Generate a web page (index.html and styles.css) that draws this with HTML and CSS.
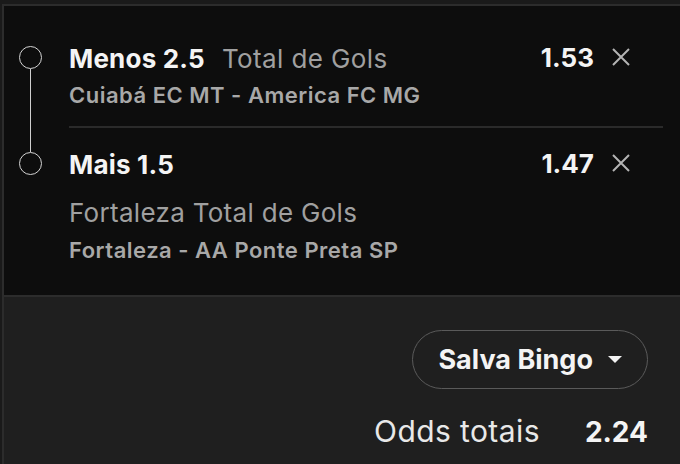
FILE: index.html
```html
<!DOCTYPE html>
<html lang="pt-BR">
<head>
  <meta charset="UTF-8">
  <meta name="viewport" content="width=device-width, initial-scale=1.0">
  <title>Boletim de apostas</title>
  <link rel="stylesheet" href="styles.css">
</head>
<body>
  <div class="slip">
    <div class="selections">
      <div class="bet">
        <div class="rail">
          <span class="rail-line rail-line-top is-empty"></span>
          <span class="dot"></span>
          <span class="rail-line rail-line-bottom"></span>
        </div>
        <div class="bet-body">
          <div class="bet-head">
            <div class="bet-title">Menos 2.5<span class="market">Total de Gols</span></div>
            <span class="odds">1.53</span>
            <button class="remove" aria-label="Remover">
              <svg width="20" height="20" viewBox="0 0 20 20"><path d="M2 2 L18 18 M18 2 L2 18" stroke="currentColor" stroke-width="2" fill="none"/></svg>
            </button>
          </div>
          <div class="event">Cuiabá EC MT - America FC MG</div>
        </div>
      </div>

      <div class="bet">
        <div class="rail">
          <span class="rail-line rail-line-top"></span>
          <span class="dot"></span>
          <span class="rail-line rail-line-bottom is-empty"></span>
        </div>
        <div class="bet-body">
          <div class="bet-head">
            <div class="bet-title">Mais 1.5</div>
            <span class="odds">1.47</span>
            <button class="remove" aria-label="Remover">
              <svg width="20" height="20" viewBox="0 0 20 20"><path d="M2 2 L18 18 M18 2 L2 18" stroke="currentColor" stroke-width="2" fill="none"/></svg>
            </button>
          </div>
          <div class="market-line">Fortaleza Total de Gols</div>
          <div class="event">Fortaleza - AA Ponte Preta SP</div>
        </div>
      </div>
    </div>

    <div class="summary">
      <button class="pill">
        Salva Bingo
        <svg width="14" height="7" viewBox="0 0 14 7"><path d="M0 0 L14 0 L7 7 Z" fill="currentColor"/></svg>
      </button>
      <div class="total">
        <span class="total-label">Odds totais</span>
        <span class="total-value">2.24</span>
      </div>
    </div>
  </div>
</body>
</html>
```

FILE: styles.css
```css
body {
  margin: 0;
  background-color: #1a1a1a;
  font-family: Inter, "Liberation Sans", Arial, sans-serif;
  color: #f2f2f2;
}
.slip {
  margin: 4px 0 0 2px;
  border-top: 2px solid #2c2c2c;
  border-left: 2px solid #2c2c2c;
  height: 458px;
  display: flex;
  flex-direction: column;
}
.selections {
  background-color: #0d0d0d;
  padding: 16px 17px 0 0;
  border-bottom: 2px solid #2c2c2c;
}
.bet {
  display: flex;
}
.rail {
  width: 65px;
  display: flex;
  flex-direction: column;
  align-items: center;
  padding: 0 29px 0 17px;
  box-sizing: border-box;
}
.rail-line {
  width: 1.5px;
  background-color: #cfcfcf;
}
.rail-line-top {
  height: 24px;
}
.rail-line-bottom {
  flex: 1;
}
.rail-line.is-empty {
  background-color: transparent;
}
.dot {
  width: 23px;
  height: 23px;
  box-sizing: border-box;
  border: 1.7px solid #d4d4d4;
  border-radius: 50%;
}
.bet-body {
  flex: 1;
  padding: 21px 0 18px;
  border-bottom: 2px solid #2a2a2a;
}
.bet:last-child .bet-body {
  border-bottom: none;
  padding-bottom: 32px;
}
.bet-head {
  display: flex;
  align-items: center;
  height: 32px;
  padding-right: 32px;
}
.bet-title {
  flex: 1;
  font-size: 26px;
  font-weight: 700;
  line-height: 32px;
  letter-spacing: 0.2px;
  color: #f4f4f4;
}
.market {
  font-weight: 400;
  color: #a0a0a0;
  margin-left: 17px;
  letter-spacing: 0.4px;
}
.odds {
  font-size: 26px;
  font-weight: 700;
  color: #f4f4f4;
  margin-top: -4px;
}
.remove {
  background: none;
  border: none;
  padding: 0;
  margin: -4px 0 0 17px;
  color: #b4b4b4;
  display: flex;
  cursor: pointer;
}
.market-line {
  margin-top: 16px;
  font-size: 26px;
  line-height: 32px;
  letter-spacing: 0.3px;
  color: #a0a0a0;
}
.event {
  margin-top: 7px;
  font-size: 22px;
  font-weight: 600;
  line-height: 26px;
  letter-spacing: 0.5px;
  color: #a8a8a8;
}
.market-line + .event {
  margin-top: 8px;
}
.summary {
  flex: 1;
  background-color: #1f1f1f;
  padding: 33px 32px 0 0;
  display: flex;
  flex-direction: column;
  align-items: flex-end;
}
.pill {
  height: 59px;
  padding: 0 25px 0 25px;
  border: 1.5px solid #5a5a5a;
  border-radius: 30px;
  background: none;
  color: #f4f4f4;
  font-family: inherit;
  font-size: 27px;
  font-weight: 700;
  display: flex;
  align-items: center;
  gap: 15px;
}
.total {
  margin-top: 24px;
  display: flex;
  align-items: baseline;
  gap: 45px;
  line-height: 36px;
}
.total-label {
  font-size: 30px;
  letter-spacing: 0.4px;
  color: #e8e8e8;
}
.total-value {
  font-size: 28px;
  font-weight: 700;
  color: #f4f4f4;
}
```
